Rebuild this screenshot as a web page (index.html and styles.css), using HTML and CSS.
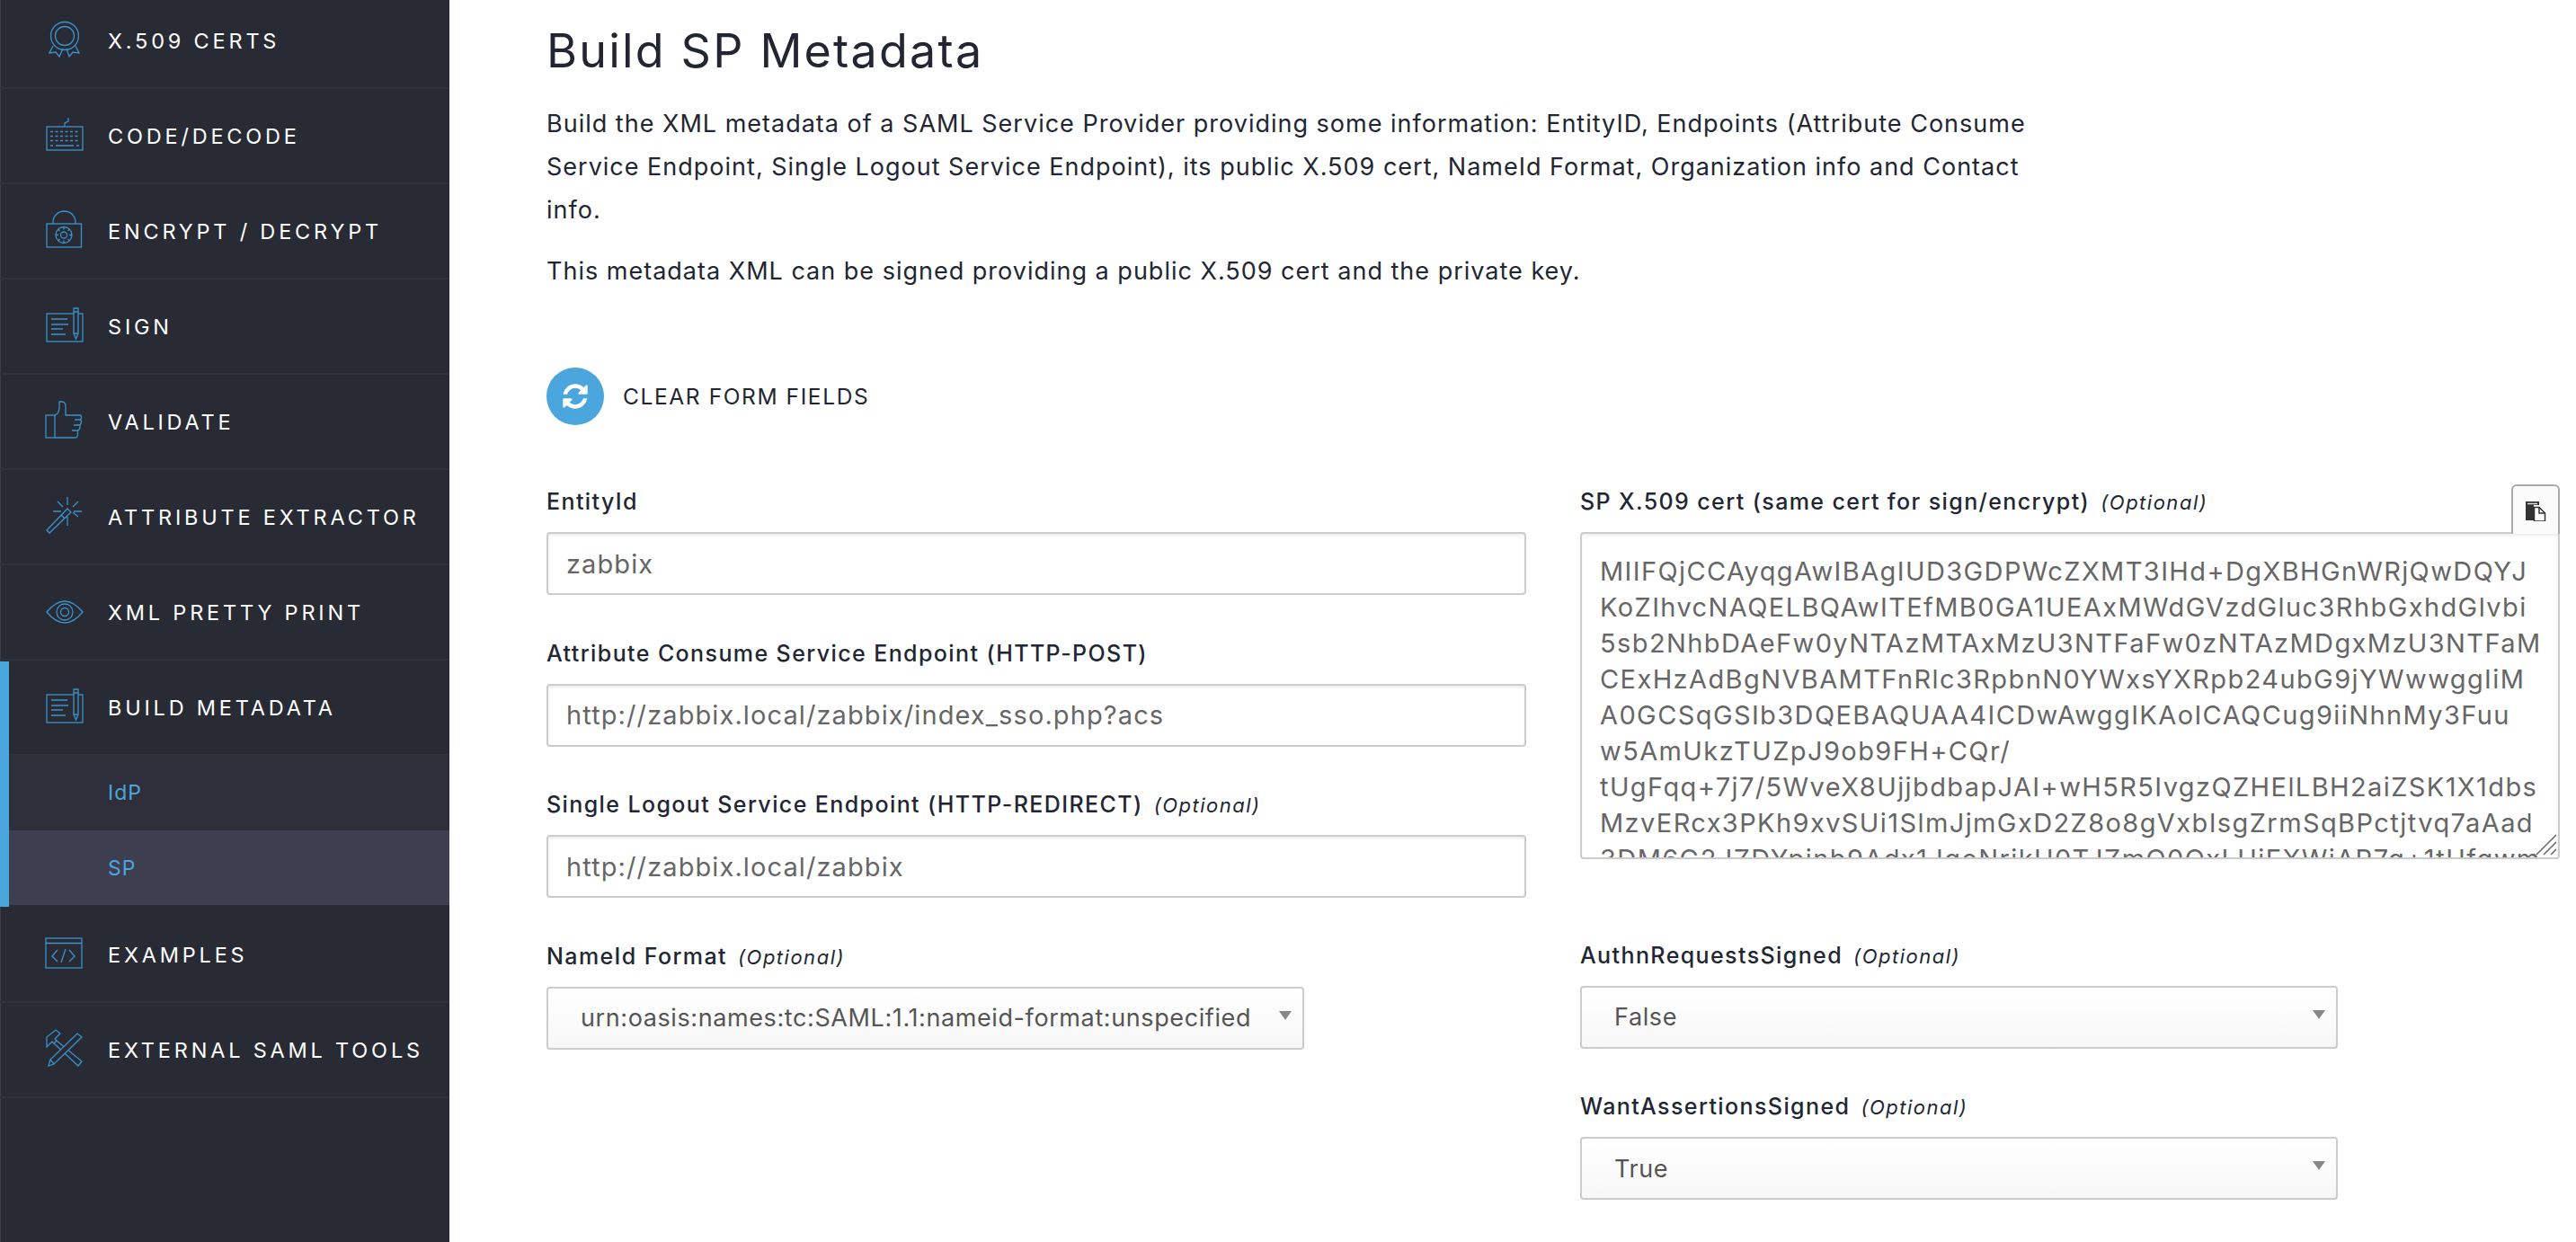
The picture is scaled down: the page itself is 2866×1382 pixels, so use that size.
FILE: index.html
```html
<!DOCTYPE html>
<html lang="en">
<head>
<meta charset="utf-8">
<title>Build SP Metadata</title>
<link rel="stylesheet" href="styles.css">
</head>
<body>
<div class="page">
  <nav class="sidebar">
    <ul class="menu">
      <li class="item"><a class="link">
        <svg class="icon" viewBox="0 0 50 50"><circle cx="25" cy="20" r="15.5"/><circle cx="25" cy="20" r="10.5"/><path d="M12 31L8 39l7-1 4 5 4-9M37 31l4 8-7-1-4 5-3-9"/></svg>
        <span>X.509 CERTS</span></a></li>
      <li class="item"><a class="link">
        <svg class="icon" viewBox="0 0 50 50"><rect x="5" y="15" width="40" height="26"/><path d="M25 15v-4l4-2V5"/><path class="dash" d="M9 20.5h32M9 25.5h32M9 30.5h32"/><path d="M9 36h3M15 36h20M38 36h3"/></svg>
        <span>CODE/DECODE</span></a></li>
      <li class="item"><a class="link">
        <svg class="icon" viewBox="0 0 50 50"><rect x="5" y="17" width="38.5" height="26"/><path d="M12 17v-2a12.500 12 0 0 1 25 0v2"/><circle cx="24" cy="29.500" r="9"/><circle cx="24" cy="29.500" r="3.500"/><path d="M24 20.500v3M24 35.500v3M15 29.500h3M30 29.500h3M17.500 23l2 2M30.500 36l-2-2M30.500 23l-2 2M17.500 36l2-2"/></svg>
        <span>ENCRYPT / DECRYPT</span></a></li>
      <li class="item"><a class="link">
        <svg class="icon" viewBox="0 0 50 50"><rect x="5" y="11" width="40" height="31"/><path d="M10 17h18M10 23h19M10 28h13M10 34h16"/><path class="solid" d="M35 5h5v28l-2.500 6-2.500-6z"/><path d="M35 9h5M35 33h5"/></svg>
        <span>SIGN</span></a></li>
      <li class="item"><a class="link">
        <svg class="icon" viewBox="0 0 50 50"><rect x="4" y="18" width="10" height="25"/><path d="M14 18c3-1 5-4 5-9V3h3c3 0 4 3 4 6v9h16c2 0 2 5 0 5 2 0 2 6-1 6 2 0 1 6-2 6 1 0 1 8-2 8H14M42 23h-6M41 29h-6M39 35h-6"/></svg>
        <span>VALIDATE</span></a></li>
      <li class="item"><a class="link">
        <svg class="icon" viewBox="0 0 50 50"><path d="M28 16l4 4L8 43l-3-3zM21 23l4 4M28 3v9M28 25v10M12 19h9M35 19h9M17 8l6 6M40 8l-6 6M40 25l-6-5"/></svg>
        <span>ATTRIBUTE EXTRACTOR</span></a></li>
      <li class="item"><a class="link">
        <svg class="icon" viewBox="0 0 50 50"><path d="M5 25Q25 1 45 25 25 49 5 25z"/><circle cx="25" cy="25" r="9"/><circle cx="25" cy="25" r="4.500"/></svg>
        <span>XML PRETTY PRINT</span></a></li>
      <li class="item item-open">
        <a class="link">
        <svg class="icon" viewBox="0 0 50 50"><rect x="5" y="11" width="40" height="31"/><path d="M10 17h18M10 23h19M10 28h13M10 34h16"/><path class="solid" d="M35 5h5v28l-2.500 6-2.500-6z"/><path d="M35 9h5M35 33h5"/></svg>
        <span>BUILD METADATA</span></a>
        <ul class="submenu">
          <li class="sub">IdP</li>
          <li class="sub sub-active">SP</li>
        </ul>
      </li>
      <li class="item"><a class="link">
        <svg class="icon" viewBox="0 0 50 50"><rect x="4" y="7" width="40" height="33"/><path d="M4 12.500h40M17 20l-6 7 6 6M30 20l6 7-6 6M26 19l-5 15"/></svg>
        <span>EXAMPLES</span></a></li>
      <li class="item"><a class="link">
        <svg class="icon" viewBox="0 0 50 50"><path d="M5 22V11l10-8 5 4-6 6 2 2-3 3-2-2z"/><path d="M16 15l28 23-4 5-27-25"/><path class="solid" d="M7 43l2-7L39 7l5 4-31 30z"/><path d="M9 36l4 5"/></svg>
        <span>EXTERNAL SAML TOOLS</span></a></li>
    </ul>
  </nav>

  <main class="content">
    <h1 class="title">Build SP Metadata</h1>
    <p class="lead">Build the XML metadata of a SAML Service Provider providing some information: EntityID, Endpoints (Attribute Consume Service Endpoint, Single Logout Service Endpoint), its public X.509 cert, NameId Format, Organization info and Contact info.</p>
    <p class="lead">This metadata XML can be signed providing a public X.509 cert and the private key.</p>

    <div class="clear">
      <span class="clear-btn">
        <svg class="clear-icon" viewBox="0 0 1792 1792"><path d="M1639 1056q0 5-1 7-64 268-268 434.500t-478 166.500q-146 0-282.500-55t-243.500-157l-129 129q-19 19-45 19t-45-19-19-45v-448q0-26 19-45t45-19h448q26 0 45 19t19 45-19 45l-137 137q71 66 161 102t187 36q134 0 250-65t186-179q11-17 53-117 8-23 30-23h192q13 0 22.500 9.500t9.500 22.500zm25-800v448q0 26-19 45t-45 19h-448q-26 0-45-19t-19-45 19-45l138-138q-148-137-349-137-134 0-250 65t-186 179q-11 17-53 117-8 23-30 23h-199q-13 0-22.500-9.500t-9.500-22.500v-7q65-268 270-434.500t480-166.500q146 0 284 55.500t245 156.500l130-129q19-19 45-19t45 19 19 45z"/></svg>
      </span>
      <span class="clear-text">CLEAR FORM FIELDS</span>
    </div>

    <form class="form">
      <div class="col">
        <div class="field">
          <label class="label">EntityId</label>
          <input class="input" type="text" value="zabbix">
        </div>
        <div class="field">
          <label class="label">Attribute Consume Service Endpoint (HTTP-POST)</label>
          <input class="input" type="text" value="http://zabbix.local/zabbix/index_sso.php?acs">
        </div>
        <div class="field">
          <label class="label">Single Logout Service Endpoint (HTTP-REDIRECT) <em class="opt">(Optional)</em></label>
          <input class="input" type="text" value="http://zabbix.local/zabbix">
        </div>
        <div class="field">
          <label class="label">NameId Format <em class="opt">(Optional)</em></label>
          <div class="select-wrap select-name">
            <select class="select"><option>urn:oasis:names:tc:SAML:1.1:nameid-format:unspecified</option></select>
          </div>
        </div>
      </div>
      <div class="col">
        <div class="field field-cert">
          <label class="label">SP X.509 cert (same cert for sign/encrypt) <em class="opt">(Optional)</em></label>
          <button class="copy" type="button">
            <svg class="copy-icon" viewBox="0 0 24 24"><path class="copy-back" d="M1 2h15v4H10v17H1z"/><path class="copy-line" d="M3 4.500h11"/><path class="copy-front" d="M10.500 8.500H16l6.500 6.500v9H10.500z"/><path class="copy-fold" d="M16 8.500V15h6.500"/></svg>
          </button>
          <div class="cert-wrap">
            <textarea class="cert" spellcheck="false">MIIFQjCCAyqgAwIBAgIUD3GDPWcZXMT3IHd+DgXBHGnWRjQwDQYJ
KoZIhvcNAQELBQAwITEfMB0GA1UEAxMWdGVzdGluc3RhbGxhdGlvbi
5sb2NhbDAeFw0yNTAzMTAxMzU3NTFaFw0zNTAzMDgxMzU3NTFaM
CExHzAdBgNVBAMTFnRlc3RpbnN0YWxsYXRpb24ubG9jYWwwggIiM
A0GCSqGSIb3DQEBAQUAA4ICDwAwggIKAoICAQCug9iiNhnMy3Fuu
w5AmUkzTUZpJ9ob9FH+CQr/
tUgFqq+7j7/5WveX8UjjbdbapJAI+wH5R5IvgzQZHElLBH2aiZSK1X1dbs
MzvERcx3PKh9xvSUi1SlmJjmGxD2Z8o8gVxbIsgZrmSqBPctjtvq7aAad
3DM6G2JZDYpjnb9Adx1JgoNrjkH0TJZmO0OxLUjEXWjAR7g+1tHfgwm</textarea>
            <svg class="grip" viewBox="0 0 26 26"><path d="M24 2L2 24M24 10L10 24M24 18l-6 6"/></svg>
          </div>
        </div>
        <div class="field">
          <label class="label">AuthnRequestsSigned <em class="opt">(Optional)</em></label>
          <div class="select-wrap select-bool">
            <select class="select"><option>False</option></select>
          </div>
        </div>
        <div class="field">
          <label class="label">WantAssertionsSigned <em class="opt">(Optional)</em></label>
          <div class="select-wrap select-bool">
            <select class="select"><option>True</option></select>
          </div>
        </div>
      </div>
    </form>
  </main>
</div>
</body>
</html>
```
FILE: styles.css
```css
* { box-sizing: border-box; }
html, body { margin: 0; height: 100%; overflow: hidden; }
body { font-family: Inter, "Liberation Sans", sans-serif; background: #fff; color: #222633; }

.page { display: flex; height: 1382px; overflow: hidden; }

/* Sidebar */
.sidebar { flex: 0 0 500px; background: #282a34; box-shadow: inset 1px 0 0 #3a3c47; overflow: hidden; }
.menu { list-style: none; margin: -7px 0 0; padding: 0; }
.item { border-bottom: 2px solid #2f313c; }
.link { display: flex; align-items: center; height: 104px; padding-left: 47px; color: #fff; font-size: 23.500px; font-weight: 400; letter-spacing: 3.800px; white-space: nowrap; }
.link span { margin-left: 23px; }
.icon { flex: none; width: 50px; height: 50px; fill: none; stroke: #3e92c9; stroke-width: 1.300; }
.icon .dash { stroke-dasharray: 3 2.500; }
.icon .solid { fill: #282a34; }

.item-open { position: relative; border-bottom: 0; margin-bottom: 3px; }
.item-open::before { content: ""; position: absolute; left: 0; top: 1px; bottom: -2px; width: 10px; background: #4ba6dd; }
.item-open .link { height: 105px; border-bottom: 1px solid #2f313c; }
.submenu { list-style: none; margin: 0 0 0 10px; padding: 0; }
.sub { display: flex; align-items: center; height: 84px; padding-left: 110px; background: #2e2f3b; color: #4ba6dd; font-size: 23px; letter-spacing: 1px; }
.sub-active { height: 83px; background: #3d3e4f; }

/* Main */
.content { flex: 1; min-width: 0; padding: 0 18px 0 108px; }
.title { margin: 24px 0 0; font-size: 52px; line-height: 66px; font-weight: 400; letter-spacing: 2.200px; color: #222633; }
.lead { max-width: 1670px; margin: 20px 0 0; font-size: 27px; line-height: 48px; font-weight: 400; letter-spacing: 1px; }
.title + .lead { margin-top: 24px; }

.clear { display: flex; align-items: center; margin-top: 83px; }
.clear-btn { display: flex; align-items: center; justify-content: center; width: 64px; height: 64px; border-radius: 50%; background: #4ba6dd; }
.clear-icon { width: 32px; height: 32px; fill: #fff; }
.clear-text { margin-left: 21px; font-size: 24.500px; line-height: 34px; letter-spacing: 1.600px; }

.form { display: grid; grid-template-columns: 1090px 1090px; column-gap: 60px; margin-top: 68px; }
.col { display: flex; flex-direction: column; gap: 47.500px; }
.field { position: relative; display: flex; flex-direction: column; }
.label { height: 34px; margin-bottom: 17px; font-size: 25px; line-height: 34px; font-weight: 500; letter-spacing: 1.400px; white-space: nowrap; }
.opt { font-size: 22px; font-weight: 400; font-style: italic; margin-left: 4px; letter-spacing: 1.500px; }

.input { width: 100%; height: 70px; padding: 0 20px; border: 2px solid #ccc; border-radius: 4px; box-shadow: inset 0 2px 3px rgba(0,0,0,.08); background: #fff; color: #666; font: 400 29px Inter, "Liberation Sans", sans-serif; letter-spacing: 1.100px; outline: 0; }

.cert-wrap { position: relative; height: 364px; }
.cert { display: block; width: 100%; height: 100%; padding: 22px 20px 0; border: 2px solid #ccc; border-radius: 4px; box-shadow: inset 0 2px 3px rgba(0,0,0,.08); background: #fff; color: #666; font: 400 29px/40px Inter, "Liberation Sans", sans-serif; letter-spacing: 1.400px; white-space: pre; overflow: hidden; resize: none; outline: 0; }
.grip { position: absolute; right: 2px; bottom: 3px; width: 26px; height: 26px; fill: none; stroke: #666; stroke-width: 1.500; }
.field-cert { margin-bottom: 42px; }
.copy { position: absolute; right: 0; top: -2px; z-index: 1; display: flex; align-items: center; justify-content: center; width: 54px; height: 55px; padding: 0; border: 2px solid #aaa; border-bottom: 0; border-radius: 6px 6px 0 0; background: #fbfbfb; }
.copy-icon { width: 24px; height: 24px; }
.copy-back { fill: #333; }
.copy-line { stroke: #ddd; stroke-width: 1.500; fill: none; }
.copy-front { fill: #fff; stroke: #333; stroke-width: 1.500; }
.copy-fold { fill: none; stroke: #333; stroke-width: 1.500; }

.select-wrap { position: relative; height: 70px; }
.select-name { width: 843px; }
.select-bool { width: 843px; }
.select-wrap::after { content: ""; position: absolute; right: 14px; top: 27px; border: 7px solid transparent; border-top: 10px solid #888; border-bottom: 0; }
.select { appearance: none; display: block; width: 100%; height: 100%; padding: 0 36px 0 36px; border: 2px solid #ccc; border-radius: 4px; background: linear-gradient(#fff, #f7f7f7); color: #555; font: 400 27px Inter, "Liberation Sans", sans-serif; letter-spacing: 0.600px; outline: 0; }
```
